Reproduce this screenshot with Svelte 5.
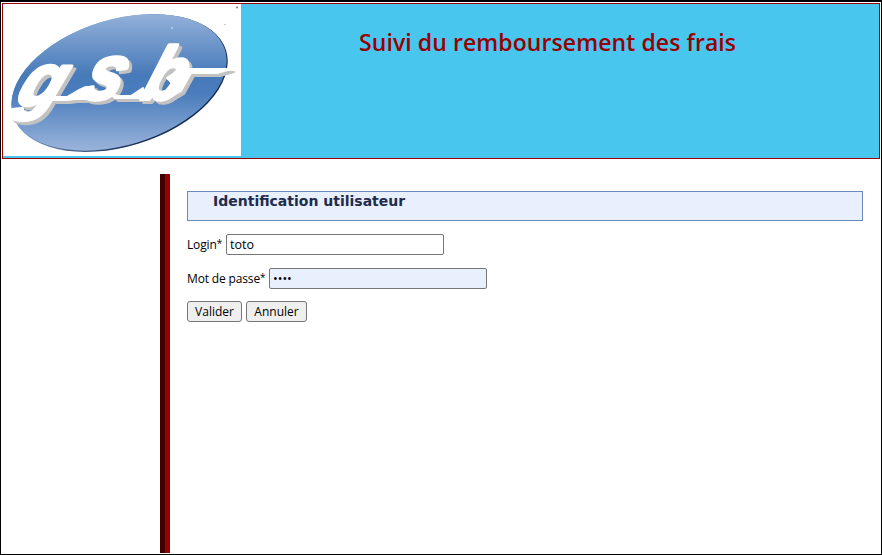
<script>
  let login = $state('toto');
  let password = $state('toto');

  const letters = [
    { char: 'g', x: 11, y: 101, size: 73, width: 43, skew: -22 },
    { char: 's', x: 76, y: 95, size: 78, width: 39, skew: -20 },
    { char: 'b', x: 137, y: 95, size: 74, width: 39, skew: -19 }
  ];

  function reset() {
    login = '';
    password = '';
  }
</script>

<div class="page">
  <header>
    <svg class="logo" viewBox="0 0 238 152" role="img" aria-label="gsb">
      <defs>
        <linearGradient id="blue" gradientUnits="userSpaceOnUse" x1="20.5" y1="-67" x2="-20.5" y2="67">
          <stop offset="0" stop-color="#95b2db" />
          <stop offset="0.45" stop-color="#477ab9" />
          <stop offset="0.58" stop-color="#4b7dbc" />
          <stop offset="1" stop-color="#9cb5dc" />
        </linearGradient>
        <linearGradient id="rim" x1="0" y1="0" x2="1" y2="1">
          <stop offset="0.35" stop-color="#7698c9" />
          <stop offset="0.75" stop-color="#142d55" />
        </linearGradient>
      </defs>
      <rect width="238" height="152" fill="#fff" />
      <g transform="translate(116.5 79) rotate(-17)">
        <ellipse rx="111.5" ry="63.5" fill="url(#rim)" />
      </g>
      <g transform="translate(116.1 78.4) rotate(-17)">
        <ellipse rx="110.8" ry="62.8" fill="url(#blue)" />
      </g>
      <g class="lettering">
        {#each letters as l}
          <text
            transform="translate({l.x} {l.y}) skewX({l.skew})"
            font-size={l.size}
            textLength={l.width}
            lengthAdjust="spacingAndGlyphs">{l.char}</text>
        {/each}
        <path d="M46 89L52 93H64L76 86L84 83L90 90L84 95H72L64 96H48ZM106 88L114 92H128L140 84L144 94H112ZM160 88L166 94L178 87L188 69H214L228 65H176L164 74L168 78L178 71L174 83Z" />
      </g>
      <circle cx="169" cy="24" r="1" fill="#bcd0eb" />
      <circle cx="222" cy="20.5" r="0.7" fill="#aaa" />
      <circle cx="234" cy="3.5" r="1" fill="#777" />
    </svg>
    <h1>Suivi du remboursement des frais</h1>
  </header>
  <main>
    <h2>Identification utilisateur</h2>
    <form onsubmit={(e) => e.preventDefault()}>
      <div class="field">
        <label for="login">Login<span class="star">*</span></label>
        <input id="login" type="text" bind:value={login} />
      </div>
      <div class="field second">
        <label for="pass">Mot de passe<span class="star">*</span></label>
        <input id="pass" class="filled" type="password" bind:value={password} />
      </div>
      <div class="actions">
        <button class="ok" type="submit">Valider</button>
        <button class="cancel" type="button" onclick={reset}>Annuler</button>
      </div>
    </form>
  </main>
</div>

<style>
  .page {
    box-sizing: border-box;
    width: 882px;
    height: 555px;
    border: 1px solid #000;
    border-top-width: 2px;
    padding: 1px;
    background: #fff;
    color: #000;
    font-family: 'Trebuchet MS', 'Open Sans', 'Noto Sans', sans-serif;
    overflow: hidden;
  }
  header {
    box-sizing: border-box;
    display: flex;
    width: 878px;
    height: 156px;
    border: 1px solid #900;
    background: #48c6ee;
  }
  .logo {
    display: block;
    flex: none;
    width: 238px;
    height: 152px;
  }
  .lettering {
    fill: #fff;
    stroke: #fff;
    filter: drop-shadow(3px 3px 0 #c2c2c2);
  }
  .lettering text {
    font-family: 'Liberation Sans', sans-serif;
    font-weight: bold;
    font-style: italic;
    stroke-width: 4;
    stroke-linejoin: round;
  }
  .lettering path {
    stroke-width: 2;
    stroke-linejoin: round;
  }
  h1 {
    margin: 22px 0 0 118px;
    color: #900;
    font-size: 23px;
    font-weight: 650;
    line-height: 32px;
    letter-spacing: 0.08px;
    white-space: nowrap;
  }
  main {
    box-sizing: border-box;
    height: 379px;
    margin: 15px 0 0 158px;
    padding: 17px 17px 0 22px;
    border-left: 5px solid #400000;
    box-shadow: inset 5px 0 #900;
  }
  h2 {
    box-sizing: border-box;
    width: 676px;
    height: 30px;
    margin: 0;
    padding-left: 25px;
    border: 1px solid #6b8abb;
    background: #e8f0fe;
    color: #1f2b4d;
    font: bold 14px/18px Verdana, 'DejaVu Sans', sans-serif;
  }
  .field {
    display: flex;
    align-items: center;
    height: 21px;
    margin-top: 13px;
    font-size: 12px;
    white-space: nowrap;
  }
  label {
    width: 39px;
    letter-spacing: -0.15px;
  }
  .star {
    font-size: 10px;
    line-height: 1;
    vertical-align: 2px;
  }
  .second label {
    width: 82px;
  }
  input {
    box-sizing: border-box;
    width: 218px;
    height: 21px;
    margin: 0;
    padding: 1px 3px;
    border: 1px solid #767676;
    border-radius: 2px;
    outline: none;
    background: #fff;
    color: #000;
    font: 12.5px 'Trebuchet MS', 'Open Sans', sans-serif;
  }
  .filled {
    background: #e8f0fe;
  }
  .actions {
    display: flex;
    gap: 4px;
    margin-top: 12px;
  }
  button {
    box-sizing: border-box;
    height: 21px;
    padding: 0;
    border: 1px solid #767676;
    border-radius: 3px;
    background: #efefef;
    color: #000;
    font: 12px/18px 'Trebuchet MS', 'Open Sans', sans-serif;
  }
  .ok {
    width: 55px;
  }
  .cancel {
    width: 61px;
  }
</style>
